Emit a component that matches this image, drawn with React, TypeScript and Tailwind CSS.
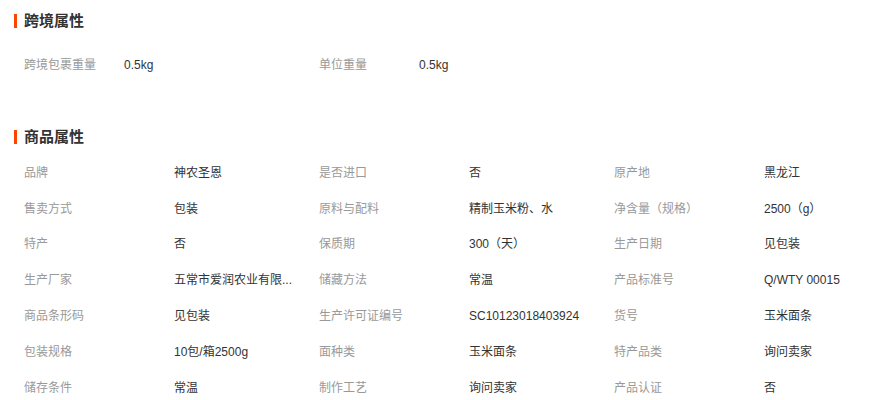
const font = { fontFamily: '"Liberation Sans", "Noto Sans CJK SC", sans-serif' };

const crossBorder = [
  ["跨境包裹重量", "0.5kg"],
  ["单位重量", "0.5kg"],
];

const attrs = [
  ["品牌", "神农圣恩"],
  ["是否进口", "否"],
  ["原产地", "黑龙江"],
  ["售卖方式", "包装"],
  ["原料与配料", "精制玉米粉、水"],
  ["净含量（规格）", "2500（g）"],
  ["特产", "否"],
  ["保质期", "300（天）"],
  ["生产日期", "见包装"],
  ["生产厂家", "五常市爱润农业有限..."],
  ["储藏方法", "常温"],
  ["产品标准号", "Q/WTY 00015"],
  ["商品条形码", "见包装"],
  ["生产许可证编号", "SC10123018403924"],
  ["货号", "玉米面条"],
  ["包装规格", "10包/箱2500g"],
  ["面种类", "玉米面条"],
  ["特产品类", "询问卖家"],
  ["储存条件", "常温"],
  ["制作工艺", "询问卖家"],
  ["产品认证", "否"],
];

function Heading({ title }: { title: string }) {
  return (
    <div className="flex items-center h-[20px]">
      <span className="w-[3px] h-[14px] bg-[#ff4400] mr-[7px]" />
      <span className="text-[15px] font-bold text-[#333]">{title}</span>
    </div>
  );
}

export default function App() {
  return (
    <div className="bg-white w-[895px] h-[400px] overflow-hidden pl-[14px] text-[12px]" style={font}>
      <div className="pt-[11px]">
        <Heading title="跨境属性" />
        <div className="grid grid-cols-[295px_295px] mt-[16px] pl-[10px]">
          {crossBorder.map(([k, v]) => (
            <div key={k} className="flex items-center h-[36px]">
              <span className="w-[100px] text-[#999]">{k}</span>
              <span className="text-[#333]">{v}</span>
            </div>
          ))}
        </div>
      </div>
      <div className="mt-[44px]">
        <Heading title="商品属性" />
        <div className="grid grid-cols-[295px_295px_295px] mt-[8px] pl-[10px]">
          {attrs.map(([k, v]) => (
            <div key={k} className="flex items-center h-[35.8px]">
              <span className="w-[150px] shrink-0 text-[#999]">{k}</span>
              <span className="text-[#333] whitespace-nowrap">{v}</span>
            </div>
          ))}
        </div>
      </div>
    </div>
  );
}
